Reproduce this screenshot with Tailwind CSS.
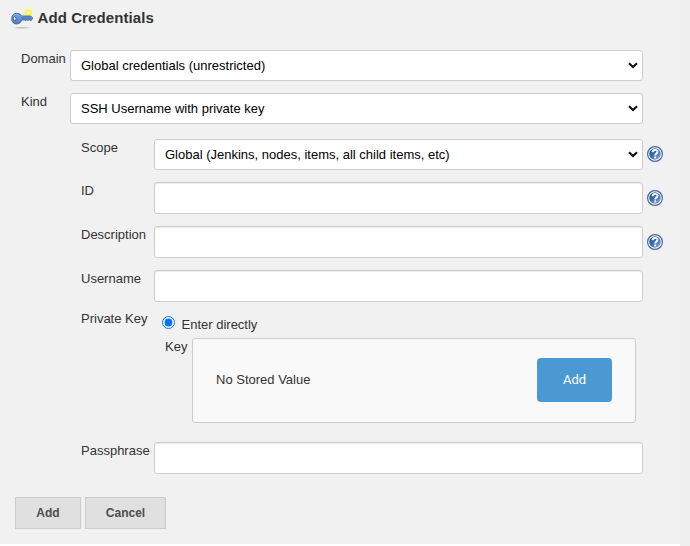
<!DOCTYPE html>
<html lang="en">
<head>
<meta charset="utf-8">
<title>Add Credentials</title>
<script src="https://cdn.jsdelivr.net/npm/@tailwindcss/browser@4"></script>
</head>
<body class="w-[690px] h-[546px] overflow-hidden bg-[#f0f0f0] font-['Liberation_Sans',Arial,sans-serif] text-[13px] leading-4 text-[#333]">
<svg class="absolute w-0 h-0">
  <defs>
    <linearGradient id="hg" x1="0" y1="0" x2="1" y2="1"><stop offset="0" stop-color="#204a87"/><stop offset=".45" stop-color="#3d6cab"/><stop offset="1" stop-color="#8db2de"/></linearGradient>
    <symbol id="help" viewBox="0 0 16 16">
      <circle cx="8" cy="8" r="7.400" fill="#fff" stroke="#3f67a0" stroke-width="1.200"/>
      <circle cx="8" cy="8" r="5.800" fill="url(#hg)"/>
      <path d="M5.600 6.200C5.700 4.500 6.700 3.800 8.100 3.800c1.500 0 2.400.8 2.400 2C10.500 7.500 8.200 7.600 8.200 9.500" fill="none" stroke="#fff" stroke-width="1.800"/>
      <rect x="7.200" y="10.500" width="2" height="1.900" fill="#fff"/>
    </symbol>
    <symbol id="chev" viewBox="0 0 10 7"><path d="M1 1.200 5 5.100 9 1.200" fill="none" stroke="#101010" stroke-width="2.100"/></symbol>
  </defs>
</svg>
<div class="w-[680px] h-[544px] bg-[#f1f1f1] flex flex-col">
  <h1 class="flex h-[34px] shrink-0 pl-[10px] pt-[7px] text-[15px] font-bold leading-[22px]">
    <svg class="w-6 h-6 mr-[3.500px] shrink-0" viewBox="0 0 24 24">
      <defs>
        <radialGradient id="sh"><stop offset="0" stop-color="#999" stop-opacity=".8"/><stop offset="1" stop-color="#bbb" stop-opacity="0"/></radialGradient>
        <linearGradient id="kg" x1="0" y1="0" x2="0" y2="1"><stop offset="0" stop-color="#82a9dc"/><stop offset="1" stop-color="#4a7bc0"/></linearGradient>
      </defs>
      <ellipse cx="12" cy="20.800" rx="11" ry="1.300" fill="url(#sh)"/>
      <circle cx="18.500" cy="5.700" r="2.600" fill="#fffde0" stroke="#fff445" stroke-width="2.200"/>
      <path d="M6.500 6.300c2.500 0 4.400 1 5.100 2.700H20.800L22.700 11 21.500 13.300H20l-.8-.6-1 .9-1.200-.9-1 .9-1.200-.6H11.800C11.100 15.400 9 17 6.500 17 3.600 17 1.600 14.700 1.600 11.700S3.600 6.300 6.500 6.300Z" fill="url(#kg)" stroke="#365f9e" stroke-width=".8"/>
      <path d="M11.500 11H21" stroke="#315d9c" stroke-width=".6"/>
      <ellipse cx="4.700" cy="11.700" rx="1.300" ry="2.100" fill="#eef2f7" stroke="#28518e" stroke-width=".8"/>
    </svg>
    <span class="tracking-[0.090px]">Add Credentials</span>
  </h1>
  <form class="flex flex-col">
    <div class="flex mt-4 pl-[21px] h-[31px]">
      <label class="w-[49px] pt-px">Domain</label>
      <div class="flex items-center justify-between w-[573px] border border-[#ccc] rounded-[3px] bg-white pl-[10px] pr-1 text-black"><span>Global credentials (unrestricted)</span><svg class="w-[10px] h-[7px]"><use href="#chev"/></svg></div>
    </div>
    <div class="flex mt-3 pl-[21px] h-[31px]">
      <label class="w-[49px] pt-px">Kind</label>
      <div class="flex items-center justify-between w-[573px] border border-[#ccc] rounded-[3px] bg-white pl-[10px] pr-1 text-black"><span>SSH Username with private key</span><svg class="w-[10px] h-[7px]"><use href="#chev"/></svg></div>
    </div>
    <div class="flex mt-[15px] pl-[81px] h-[31px]">
      <label class="w-[73px] pt-px">Scope</label>
      <div class="flex items-center justify-between w-[489px] border border-[#ccc] rounded-[3px] bg-white pl-[10px] pr-1 text-black"><span>Global (Jenkins, nodes, items, all child items, etc)</span><svg class="w-[10px] h-[7px]"><use href="#chev"/></svg></div>
      <svg class="w-4 h-4 ml-1 mt-[7px]"><use href="#help"/></svg>
    </div>
    <div class="flex mt-3 pl-[81px] h-8">
      <label class="w-[73px] pt-px">ID</label>
      <input class="w-[489px] border border-[#ccc] rounded-[3px] bg-white shadow-[inset_0_1px_1px_rgba(0,0,0,0.075)]">
      <svg class="w-4 h-4 ml-1 mt-2"><use href="#help"/></svg>
    </div>
    <div class="flex mt-3 pl-[81px] h-8">
      <label class="w-[73px] pt-px">Description</label>
      <input class="w-[489px] border border-[#ccc] rounded-[3px] bg-white shadow-[inset_0_1px_1px_rgba(0,0,0,0.075)]">
      <svg class="w-4 h-4 ml-1 mt-2"><use href="#help"/></svg>
    </div>
    <div class="flex mt-3 pl-[81px] h-8">
      <label class="w-[73px] pt-px">Username</label>
      <input class="w-[489px] border border-[#ccc] rounded-[3px] bg-white shadow-[inset_0_1px_1px_rgba(0,0,0,0.075)]">
    </div>
    <div class="flex mt-2 pl-[81px] h-[113px]">
      <label class="w-[73px] pt-px">Private Key</label>
      <div class="flex flex-col">
        <div class="flex h-7 pl-2 pt-[6px]">
          <input type="radio" checked class="w-[13px] h-[13px] mr-[6.500px] accent-[#0075ff]">
          <span class="pt-px">Enter directly</span>
        </div>
        <div class="flex pl-[11px] h-[85px]">
          <label class="w-[27px] pt-px">Key</label>
          <div class="flex items-start justify-between w-[444px] border border-[#ccc] rounded-[3px] bg-[#f9f9f9] px-[23px] pt-[19px]">
            <span class="leading-[44px]">No Stored Value</span>
            <button type="button" class="w-[75px] h-11 bg-[#4b99d3] rounded-[4px] text-white text-[13px] font-['Roboto',sans-serif] pb-px">Add</button>
          </div>
        </div>
      </div>
    </div>
    <div class="flex mt-[19px] pl-[81px] h-8">
      <label class="w-[73px] pt-px">Passphrase</label>
      <input class="w-[489px] border border-[#ccc] rounded-[3px] bg-white shadow-[inset_0_1px_1px_rgba(0,0,0,0.075)]">
    </div>
    <div class="flex gap-1 mt-[23px] pl-[15px] font-bold text-[12px] text-[#4d4d4d]">
      <button type="button" class="w-[66px] h-8 bg-[#e0e0e0] border border-[#ccc]">Add</button>
      <button type="button" class="w-[81px] h-8 bg-[#e0e0e0] border border-[#ccc]">Cancel</button>
    </div>
  </form>
</div>
<div class="w-[680px] h-[2px] bg-white"></div>
</body>
</html>
